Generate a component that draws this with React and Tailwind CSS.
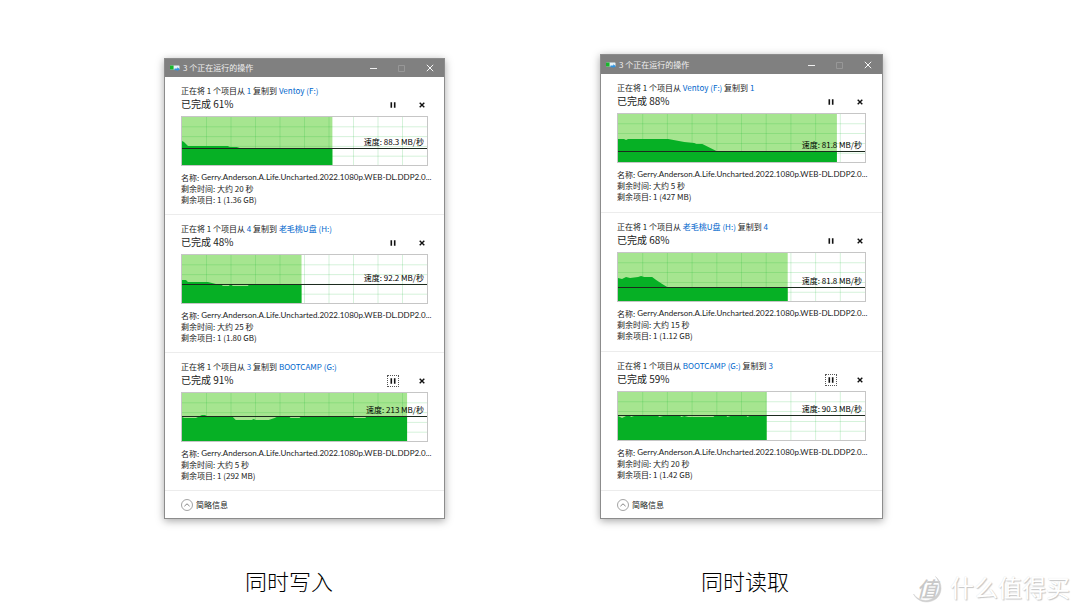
const FILE_NAME = "Gerry.Anderson.A.Life.Uncharted.2022.1080p.WEB-DL.DDP2.0...";

const writing = [
  {
    id: "w1", from: "1", to: "Ventoy (F:)", done: 61, speed: "88.3 MB/秒", time: "大约 20 秒", items: "1 (1.36 GB)",
    fill: 151, line: 32,
    shape: "0,24 2,25 6,29 46,29 48,30 55,30 58,31 62,31 63,32",
  },
  {
    id: "w2", from: "4", to: "老毛桃U盘 (H:)", done: 48, speed: "92.2 MB/秒", time: "大约 25 秒", items: "1 (1.80 GB)",
    fill: 120, line: 30,
    shape: "0,25 4,25 6,27 26,27 30,28 34,29 40,30 41,31 47,31 48,30 50,30 51,31 66,31 67,30 97,29 100,30 106,29 108,30",
  },
  {
    id: "w3", from: "3", to: "BOOTCAMP (G:)", done: 91, speed: "213 MB/秒", time: "大约 5 秒", items: "1 (292 MB)", focused: true,
    fill: 226, line: 24,
    shape: "0,24 2,25 14,25 18,23 20,22 23,22 25,23 30,23 32,24 51,24 54,27 70,27 72,26 74,27 87,27 90,26 93,25 95,24 108,24 109,25 118,25 119,24 172,24 173,25 184,25 185,24",
  },
];

const reading = [
  {
    id: "r1", from: "Ventoy (F:)", to: "1", done: 88, speed: "81.8 MB/秒", time: "大约 5 秒", items: "1 (427 MB)",
    fill: 218, line: 38,
    shape: "0,25 6,25 8,26 10,25 50,25 66,28 76,29 78,30 84,30 98,37 102,38",
  },
  {
    id: "r2", from: "老毛桃U盘 (H:)", to: "4", done: 68, speed: "81.8 MB/秒", time: "大约 15 秒", items: "1 (1.12 GB)",
    fill: 169, line: 35,
    shape: "0,25 4,26 8,24 12,25 20,24 23,23 26,24 34,24 38,27 44,31 49,34",
  },
  {
    id: "r3", from: "BOOTCAMP (G:)", to: "3", done: 59, speed: "90.3 MB/秒", time: "大约 20 秒", items: "1 (1.42 GB)", focused: true,
    fill: 148, line: 24,
    shape: "0,24 2,25 4,26 6,25 8,24 12,24 13,25 16,24 40,24 41,25 45,24 62,24 63,25 66,24 70,25 95,25 96,24 108,24 109,25 112,24 128,24 129,25 131,24",
  },
];

function SpeedChart({ job }) {
  const columns = [1, 2, 3, 4, 5, 6, 7, 8, 9];
  const rows = [1, 2, 3, 4];
  return (
    <div className="relative mt-[5px] h-[50px] border border-[#c6c6c6] bg-white">
      <svg viewBox="0 0 246 48" preserveAspectRatio="none" className="block h-full w-full" aria-hidden="true">
        <rect width={job.fill} height="48" fill="#a6e590" />
        <g stroke="#06b025" strokeOpacity="0.17" strokeWidth="1">
          {columns.map((c) => (
            <line key={c} x1={c * 24.6} x2={c * 24.6} y1="0" y2="48" />
          ))}
          {rows.map((r) => (
            <line key={r} x1="0" x2="246" y1={r * 9.8} y2={r * 9.8} />
          ))}
        </g>
        <polygon points={`0,48 ${job.shape} ${job.fill},${job.line} ${job.fill},48`} fill="#06b025" />
        <rect x="0" y={job.line - 1} width="246" height="1" fill="#1c2a1e" />
      </svg>
      <div className="absolute inset-x-0 top-0 flex items-end justify-end pr-[3px]" style={{ height: job.line - 1 }}>
        <span className="leading-3 text-black">速度: {job.speed}</span>
      </div>
    </div>
  );
}

function Job({ job, roomy }) {
  const place = "text-[#0066cc]";
  return (
    <section className={`border-b border-[#ececec] px-4 pt-2 ${roomy ? "pb-[10px]" : "pb-[9px]"}`}>
      <p className="leading-3 whitespace-nowrap">
        正在将 1 个项目从 <a href="#from" className={place}>{job.from}</a> 复制到{" "}
        <a href="#to" className={place}>{job.to}</a>
      </p>
      <div className="flex h-[14px] items-center justify-between">
        <h2 className="text-[10px] leading-[14px]">已完成 {job.done}%</h2>
        <div className="flex items-center gap-[17px] pt-px">
          <button
            type="button"
            aria-label="暂停"
            className={`flex h-3 w-3 items-center justify-center ${job.focused ? "border border-dotted border-[#555]" : ""}`}
          >
            <svg viewBox="0 0 6 6" className="h-[6px] w-[6px] shrink-0" aria-hidden="true">
              <path d="M0.5 0.2h1.6v5.6H0.5zM3.9 0.2h1.6v5.6H3.9z" fill="#111" />
            </svg>
          </button>
          <button type="button" aria-label="取消" className="flex h-3 w-3 items-center justify-center">
            <svg viewBox="0 0 6 6" className="h-[6px] w-[6px]" aria-hidden="true">
              <path d="M0.7 0.7L5.3 5.3M5.3 0.7L0.7 5.3" stroke="#111" strokeWidth="1.4" />
            </svg>
          </button>
        </div>
      </div>
      <SpeedChart job={job} />
      <div className="mt-[6px] leading-[11px] whitespace-nowrap">
        <p className="flex h-[11px] items-center gap-[2px]">
          <span>名称:</span>
          <span className="font-['Lato',sans-serif]">{FILE_NAME}</span>
        </p>
        <p>剩余时间: {job.time}</p>
        <p>剩余项目: {job.items}</p>
      </div>
    </section>
  );
}

function CopyWindow({ jobs, roomy }) {
  const control = "flex w-7 items-center justify-center";
  return (
    <article className="border border-[#8c8c8c] bg-white text-[8px] text-[#1a1a1a] shadow-[0_2px_8px_rgba(0,0,0,0.35)]">
      <header className={`flex items-stretch bg-[#808080] text-[#f0f0f0] ${roomy ? "h-[19px]" : "h-[18px]"}`}>
        <div className="flex flex-1 items-center gap-[3px] pl-[5px]">
          <svg viewBox="0 0 10 6" className="h-[6px] w-[10px]" aria-hidden="true">
            <rect x="0" y="0.5" width="9.5" height="4" rx="0.6" fill="#e8f3f8" />
            <rect x="0" y="0.5" width="3.6" height="4" fill="#19b52c" />
            <path d="M4.5 3.4h2.8V2.2L10 4.3 7.3 6V5.2H4.5z" fill="#2f93e0" />
          </svg>
          <h1 className="leading-3">3 个正在运行的操作</h1>
        </div>
        <button type="button" aria-label="最小化" className={control}>
          <svg viewBox="0 0 8 8" className="h-2 w-2" aria-hidden="true">
            <path d="M0 4.500h7" stroke="#f0f0f0" />
          </svg>
        </button>
        <button type="button" aria-label="最大化" disabled className={control}>
          <svg viewBox="0 0 8 8" className="h-2 w-2" aria-hidden="true">
            <path d="M0.5 1.5h6v6h-6z" fill="none" stroke="#979797" />
          </svg>
        </button>
        <button type="button" aria-label="关闭" className={control}>
          <svg viewBox="0 0 8 8" className="h-2 w-2" aria-hidden="true">
            <path d="M0.8 0.8l6.4 6.4M7.2 0.8L0.8 7.2" stroke="#fafafa" />
          </svg>
        </button>
      </header>
      {jobs.map((job) => (
        <Job key={job.id} job={job} roomy={roomy} />
      ))}
      <footer className="flex h-[27px] items-center px-4">
        <button type="button" className="flex items-center gap-[3px]">
          <svg viewBox="0 0 12 12" className="h-3 w-3" aria-hidden="true">
            <circle cx="6" cy="6" r="5.5" fill="none" stroke="#8c8c8c" strokeWidth="0.8" />
            <path d="M3.4 7.2L6 4.8l2.6 2.4" fill="none" stroke="#666" strokeWidth="0.8" />
          </svg>
          <span className="leading-3">简略信息</span>
        </button>
      </footer>
    </article>
  );
}

function Watermark() {
  return (
    <div className="absolute right-[10px] bottom-[9px] flex items-center gap-2 text-white">
      <div className="relative flex h-8 w-[30px] items-center justify-center">
        <svg viewBox="0 0 30 32" className="absolute inset-0 h-8 w-[30px]" aria-hidden="true">
          <path
            d="M23.5 4.500C31 10.500 31 22.500 23 27.500C15 32.500 5 29.500 1.500 22C6 28.500 15 30.500 21.500 26C28.500 21 29 10.500 23.500 4.500z"
            fill="#cfcfcf"
            stroke="#cfcfcf"
            strokeWidth="0.5"
          />
        </svg>
        <span className="text-[21px] leading-8 font-medium text-[#c8c8c8] italic">值</span>
      </div>
      <span className="pb-[2px] text-[24px] leading-8 [text-shadow:1px_1px_1px_#c4c4c4,0_0_1px_#dddddd]">什么值得买</span>
    </div>
  );
}

export default function App() {
  return (
    <main className="relative min-h-screen bg-white font-['Noto_Sans_CJK_SC',sans-serif] text-black">
      <div className="grid grid-cols-[minmax(0,281fr)_minmax(0,283fr)] gap-x-[155px] pt-[54px] pr-[197px] pl-[164px]">
        <figure className="pt-1">
          <CopyWindow jobs={writing} />
          <figcaption className="pt-[45px] pr-[31px] text-center text-[22px] leading-8 font-light">同时写入</figcaption>
        </figure>
        <figure>
          <CopyWindow jobs={reading} roomy />
          <figcaption className="pt-[45px] pl-[7px] text-center text-[22px] leading-8 font-light">同时读取</figcaption>
        </figure>
      </div>
      <Watermark />
    </main>
  );
}
